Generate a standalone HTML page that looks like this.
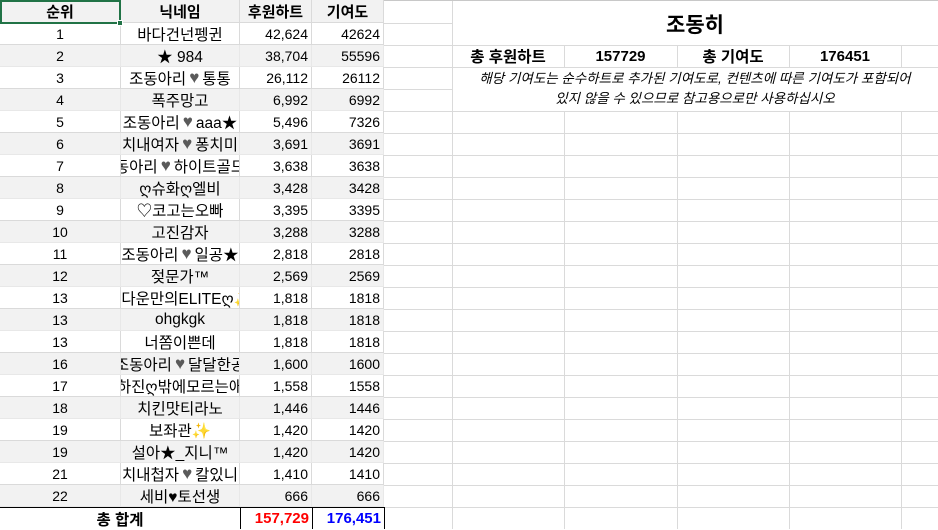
<!DOCTYPE html>
<html><head><meta charset="utf-8"><style>
*{box-sizing:border-box;margin:0;padding:0}
body{width:938px;height:529px;overflow:hidden;background:#fff;position:relative;font-family:"Liberation Sans","Noto Sans CJK KR",sans-serif;font-size:14px;color:#000}
.c{position:absolute;border-right:1px solid #dadada;border-bottom:1px solid #dadada;display:flex;align-items:center;justify-content:center;overflow:hidden;white-space:nowrap}
.r{justify-content:flex-end;padding-right:3px}
.g{background:#f2f2f2;border-right-color:#e8e8e8;border-bottom-color:#e8e8e8}
.h{font-weight:bold;background:#f2f2f2;font-size:15px}
.hr{color:#5a5a5a;font-size:17px;margin:0 3px}
.n{font-size:15.5px}
</style></head><body>
<svg style="position:absolute;left:0;top:0" width="938" height="529">
<g stroke="#dadada" stroke-width="1">
<line x1="384" y1="23.5" x2="452" y2="23.5"/>
<line x1="384" y1="45.5" x2="938" y2="45.5"/>
<line x1="384" y1="67.5" x2="938" y2="67.5"/>
<line x1="384" y1="89.5" x2="452" y2="89.5"/>
<line x1="452.5" y1="0" x2="452.5" y2="529"/>
<line x1="564.5" y1="45" x2="564.5" y2="67"/><line x1="677.5" y1="45" x2="677.5" y2="67"/><line x1="789.5" y1="45" x2="789.5" y2="67"/><line x1="901.5" y1="45" x2="901.5" y2="67"/>
<line x1="564.5" y1="111" x2="564.5" y2="529"/><line x1="677.5" y1="111" x2="677.5" y2="529"/><line x1="789.5" y1="111" x2="789.5" y2="529"/><line x1="901.5" y1="111" x2="901.5" y2="529"/>
<line x1="384" y1="111.5" x2="938" y2="111.5"/><line x1="384" y1="133.5" x2="938" y2="133.5"/><line x1="384" y1="155.5" x2="938" y2="155.5"/><line x1="384" y1="177.5" x2="938" y2="177.5"/><line x1="384" y1="199.5" x2="938" y2="199.5"/><line x1="384" y1="221.5" x2="938" y2="221.5"/><line x1="384" y1="243.5" x2="938" y2="243.5"/><line x1="384" y1="265.5" x2="938" y2="265.5"/><line x1="384" y1="287.5" x2="938" y2="287.5"/><line x1="384" y1="309.5" x2="938" y2="309.5"/><line x1="384" y1="331.5" x2="938" y2="331.5"/><line x1="384" y1="353.5" x2="938" y2="353.5"/><line x1="384" y1="375.5" x2="938" y2="375.5"/><line x1="384" y1="397.5" x2="938" y2="397.5"/><line x1="384" y1="419.5" x2="938" y2="419.5"/><line x1="384" y1="441.5" x2="938" y2="441.5"/><line x1="384" y1="463.5" x2="938" y2="463.5"/><line x1="384" y1="485.5" x2="938" y2="485.5"/><line x1="384" y1="507.5" x2="938" y2="507.5"/>
<line x1="0" y1="0.5" x2="938" y2="0.5" stroke="#c8c8c8"/>
</g></svg>

<div style="position:absolute;left:452px;top:0;width:486px;height:45px;display:flex;align-items:center;justify-content:center;font-weight:bold;font-size:21px;padding-top:2px">조동히</div>
<div style="position:absolute;left:452px;top:45px;width:112px;height:22px;display:flex;align-items:center;justify-content:center;font-weight:bold;font-size:15.5px">총 후원하트</div>
<div style="position:absolute;left:564px;top:45px;width:113px;height:22px;display:flex;align-items:center;justify-content:center;font-weight:bold;font-size:15px">157729</div>
<div style="position:absolute;left:677px;top:45px;width:112px;height:22px;display:flex;align-items:center;justify-content:center;font-weight:bold;font-size:15.5px">총 기여도</div>
<div style="position:absolute;left:789px;top:45px;width:112px;height:22px;display:flex;align-items:center;justify-content:center;font-weight:bold;font-size:15px">176451</div>
<div style="position:absolute;left:452px;top:67px;width:486px;height:44px;text-align:center;font-style:italic;font-size:13.5px;line-height:20px;padding-top:2px;white-space:nowrap">해당 기여도는 순수하트로 추가된 기여도로, 컨텐츠에 따른 기여도가 포함되어<br>있지 않을 수 있으므로 참고용으로만 사용하십시오</div>

<div class="c h" style="left:0;top:0;width:121px;height:23px">순위</div>
<div class="c h" style="left:121px;top:0;width:119px;height:23px">닉네임</div>
<div class="c h" style="left:240px;top:0;width:72px;height:23px">후원하트</div>
<div class="c h" style="left:312px;top:0;width:72px;height:23px">기여도</div>

<div class="c" style="left:0;top:23px;width:121px;height:22px">1</div><div class="c n" style="left:121px;top:23px;width:119px;height:22px">바다건넌펭귄</div><div class="c r" style="left:240px;top:23px;width:72px;height:22px">42,624</div><div class="c r" style="left:312px;top:23px;width:72px;height:22px">42624</div>
<div class="c g" style="left:0;top:45px;width:121px;height:22px">2</div><div class="c g n" style="left:121px;top:45px;width:119px;height:22px">★ 984</div><div class="c r g" style="left:240px;top:45px;width:72px;height:22px">38,704</div><div class="c r g" style="left:312px;top:45px;width:72px;height:22px">55596</div>
<div class="c" style="left:0;top:67px;width:121px;height:22px">3</div><div class="c n" style="left:121px;top:67px;width:119px;height:22px">조동아리<span class="hr">♥</span>통통</div><div class="c r" style="left:240px;top:67px;width:72px;height:22px">26,112</div><div class="c r" style="left:312px;top:67px;width:72px;height:22px">26112</div>
<div class="c g" style="left:0;top:89px;width:121px;height:22px">4</div><div class="c g n" style="left:121px;top:89px;width:119px;height:22px">폭주망고</div><div class="c r g" style="left:240px;top:89px;width:72px;height:22px">6,992</div><div class="c r g" style="left:312px;top:89px;width:72px;height:22px">6992</div>
<div class="c" style="left:0;top:111px;width:121px;height:22px">5</div><div class="c n" style="left:121px;top:111px;width:119px;height:22px">조동아리<span class="hr">♥</span>aaa★</div><div class="c r" style="left:240px;top:111px;width:72px;height:22px">5,496</div><div class="c r" style="left:312px;top:111px;width:72px;height:22px">7326</div>
<div class="c g" style="left:0;top:133px;width:121px;height:22px">6</div><div class="c g n" style="left:121px;top:133px;width:119px;height:22px">치내여자<span class="hr">♥</span>퐁치미</div><div class="c r g" style="left:240px;top:133px;width:72px;height:22px">3,691</div><div class="c r g" style="left:312px;top:133px;width:72px;height:22px">3691</div>
<div class="c" style="left:0;top:155px;width:121px;height:22px">7</div><div class="c n" style="left:121px;top:155px;width:119px;height:22px">동아리<span class="hr">♥</span>하이트골드</div><div class="c r" style="left:240px;top:155px;width:72px;height:22px">3,638</div><div class="c r" style="left:312px;top:155px;width:72px;height:22px">3638</div>
<div class="c g" style="left:0;top:177px;width:121px;height:22px">8</div><div class="c g n" style="left:121px;top:177px;width:119px;height:22px">ღ슈화ღ엘비</div><div class="c r g" style="left:240px;top:177px;width:72px;height:22px">3,428</div><div class="c r g" style="left:312px;top:177px;width:72px;height:22px">3428</div>
<div class="c" style="left:0;top:199px;width:121px;height:22px">9</div><div class="c n" style="left:121px;top:199px;width:119px;height:22px">♡코고는오빠</div><div class="c r" style="left:240px;top:199px;width:72px;height:22px">3,395</div><div class="c r" style="left:312px;top:199px;width:72px;height:22px">3395</div>
<div class="c g" style="left:0;top:221px;width:121px;height:22px">10</div><div class="c g n" style="left:121px;top:221px;width:119px;height:22px">고진감자</div><div class="c r g" style="left:240px;top:221px;width:72px;height:22px">3,288</div><div class="c r g" style="left:312px;top:221px;width:72px;height:22px">3288</div>
<div class="c" style="left:0;top:243px;width:121px;height:22px">11</div><div class="c n" style="left:121px;top:243px;width:119px;height:22px">조동아리<span class="hr">♥</span>일공★</div><div class="c r" style="left:240px;top:243px;width:72px;height:22px">2,818</div><div class="c r" style="left:312px;top:243px;width:72px;height:22px">2818</div>
<div class="c g" style="left:0;top:265px;width:121px;height:22px">12</div><div class="c g n" style="left:121px;top:265px;width:119px;height:22px">젖문가™</div><div class="c r g" style="left:240px;top:265px;width:72px;height:22px">2,569</div><div class="c r g" style="left:312px;top:265px;width:72px;height:22px">2569</div>
<div class="c" style="left:0;top:287px;width:121px;height:22px">13</div><div class="c n" style="left:121px;top:287px;width:119px;height:22px">바다운만의ELITEღ✨</div><div class="c r" style="left:240px;top:287px;width:72px;height:22px">1,818</div><div class="c r" style="left:312px;top:287px;width:72px;height:22px">1818</div>
<div class="c g" style="left:0;top:309px;width:121px;height:22px">13</div><div class="c g n" style="left:121px;top:309px;width:119px;height:22px">ohgkgk</div><div class="c r g" style="left:240px;top:309px;width:72px;height:22px">1,818</div><div class="c r g" style="left:312px;top:309px;width:72px;height:22px">1818</div>
<div class="c" style="left:0;top:331px;width:121px;height:22px">13</div><div class="c n" style="left:121px;top:331px;width:119px;height:22px">너쫌이쁜데</div><div class="c r" style="left:240px;top:331px;width:72px;height:22px">1,818</div><div class="c r" style="left:312px;top:331px;width:72px;height:22px">1818</div>
<div class="c g" style="left:0;top:353px;width:121px;height:22px">16</div><div class="c g n" style="left:121px;top:353px;width:119px;height:22px">조동아리<span class="hr">♥</span>달달한공</div><div class="c r g" style="left:240px;top:353px;width:72px;height:22px">1,600</div><div class="c r g" style="left:312px;top:353px;width:72px;height:22px">1600</div>
<div class="c" style="left:0;top:375px;width:121px;height:22px">17</div><div class="c n" style="left:121px;top:375px;width:119px;height:22px">하진ღ밖에모르는애</div><div class="c r" style="left:240px;top:375px;width:72px;height:22px">1,558</div><div class="c r" style="left:312px;top:375px;width:72px;height:22px">1558</div>
<div class="c g" style="left:0;top:397px;width:121px;height:22px">18</div><div class="c g n" style="left:121px;top:397px;width:119px;height:22px">치킨맛티라노</div><div class="c r g" style="left:240px;top:397px;width:72px;height:22px">1,446</div><div class="c r g" style="left:312px;top:397px;width:72px;height:22px">1446</div>
<div class="c" style="left:0;top:419px;width:121px;height:22px">19</div><div class="c n" style="left:121px;top:419px;width:119px;height:22px">보좌관✨</div><div class="c r" style="left:240px;top:419px;width:72px;height:22px">1,420</div><div class="c r" style="left:312px;top:419px;width:72px;height:22px">1420</div>
<div class="c g" style="left:0;top:441px;width:121px;height:22px">19</div><div class="c g n" style="left:121px;top:441px;width:119px;height:22px">설아★_지니™</div><div class="c r g" style="left:240px;top:441px;width:72px;height:22px">1,420</div><div class="c r g" style="left:312px;top:441px;width:72px;height:22px">1420</div>
<div class="c" style="left:0;top:463px;width:121px;height:22px">21</div><div class="c n" style="left:121px;top:463px;width:119px;height:22px">치내첩자<span class="hr">♥</span>칼있니</div><div class="c r" style="left:240px;top:463px;width:72px;height:22px">1,410</div><div class="c r" style="left:312px;top:463px;width:72px;height:22px">1410</div>
<div class="c g" style="left:0;top:485px;width:121px;height:22px">22</div><div class="c g n" style="left:121px;top:485px;width:119px;height:22px">세비♥토선생</div><div class="c r g" style="left:240px;top:485px;width:72px;height:22px">666</div><div class="c r g" style="left:312px;top:485px;width:72px;height:22px">666</div>

<div style="position:absolute;left:0;top:507px;width:384px;height:1px;background:#000"></div>
<div style="position:absolute;left:0;top:508px;width:240px;height:21px;display:flex;align-items:center;justify-content:center;font-weight:bold;font-size:15.5px">총 합계</div>
<div style="position:absolute;left:240px;top:507px;width:1px;height:22px;background:#000"></div>
<div style="position:absolute;left:312px;top:507px;width:1px;height:22px;background:#000"></div>
<div style="position:absolute;left:384px;top:507px;width:1px;height:22px;background:#000"></div>
<div style="position:absolute;left:241px;top:508px;width:71px;height:21px;display:flex;align-items:center;justify-content:flex-end;padding-right:3px;font-weight:bold;font-size:15px;color:#ff0000">157,729</div>
<div style="position:absolute;left:313px;top:508px;width:71px;height:21px;display:flex;align-items:center;justify-content:flex-end;padding-right:3px;font-weight:bold;font-size:15px;color:#0000ff">176,451</div>

<div style="position:absolute;left:0;top:0;width:121px;height:24px;border:2px solid #217346"></div>
<div style="position:absolute;left:117px;top:20px;width:6px;height:6px;background:#217346;border:1px solid #fff"></div>
</body></html>
